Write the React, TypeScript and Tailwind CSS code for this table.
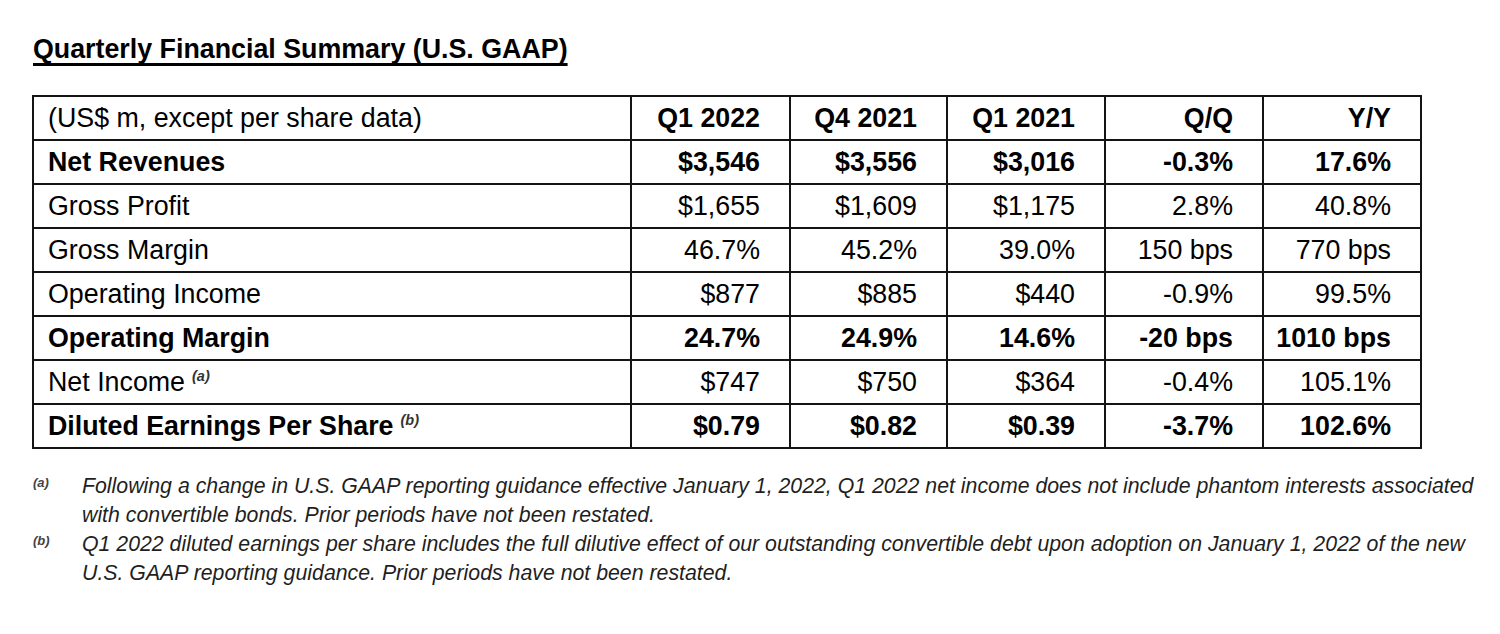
import React from "react";

type Row = {
  label: string;
  note?: string;
  bold?: boolean;
  values: string[];
};

const HEADERS = ["Q1 2022", "Q4 2021", "Q1 2021", "Q/Q", "Y/Y"];

const ROWS: Row[] = [
  { label: "Net Revenues", bold: true, values: ["$3,546", "$3,556", "$3,016", "-0.3%", "17.6%"] },
  { label: "Gross Profit", values: ["$1,655", "$1,609", "$1,175", "2.8%", "40.8%"] },
  { label: "Gross Margin", values: ["46.7%", "45.2%", "39.0%", "150 bps", "770 bps"] },
  { label: "Operating Income", values: ["$877", "$885", "$440", "-0.9%", "99.5%"] },
  { label: "Operating Margin", bold: true, values: ["24.7%", "24.9%", "14.6%", "-20 bps", "1010 bps"] },
  { label: "Net Income", note: "(a)", values: ["$747", "$750", "$364", "-0.4%", "105.1%"] },
  { label: "Diluted Earnings Per Share", note: "(b)", bold: true, values: ["$0.79", "$0.82", "$0.39", "-3.7%", "102.6%"] },
];

const NOTES = [
  {
    mark: "(a)",
    lines: [
      "Following a change in U.S. GAAP reporting guidance effective January 1, 2022, Q1 2022 net income does not include phantom interests associated",
      "with convertible bonds. Prior periods have not been restated.",
    ],
  },
  {
    mark: "(b)",
    lines: [
      "Q1 2022 diluted earnings per share includes the full dilutive effect of our outstanding convertible debt upon adoption on January 1, 2022 of the new",
      "U.S. GAAP reporting guidance. Prior periods have not been restated.",
    ],
  },
];

const cell = "h-[44px] border-2 border-[#141414] p-0 align-middle";

export default function App() {
  return (
    <div
      className="h-[634px] w-[1500px] bg-white pl-[33px] pt-[34px] text-black"
      style={{ fontFamily: '"Liberation Sans", Arial, sans-serif' }}
    >
      <h1 className="text-[26.8px] font-bold leading-[30px] underline decoration-[2.5px] underline-offset-[5px] [text-decoration-skip-ink:none]">
        Quarterly Financial Summary (U.S. GAAP)
      </h1>

      <table className="-ml-px mt-[31px] w-[1388px] table-fixed border-collapse text-[26.8px] leading-[30px]">
        <colgroup>
          <col className="w-[598px]" />
          <col className="w-[159px]" />
          <col className="w-[157px]" />
          <col className="w-[158px]" />
          <col className="w-[158px]" />
          <col className="w-[158px]" />
        </colgroup>
        <thead>
          <tr>
            <th className={`${cell} pl-[14px] text-left font-normal`}>
              (US$ m, except per share data)
            </th>
            {HEADERS.map((h) => (
              <th key={h} className={`${cell} pr-[29px] text-right font-bold`}>
                {h}
              </th>
            ))}
          </tr>
        </thead>
        <tbody>
          {ROWS.map((r) => (
            <tr key={r.label} className={r.bold ? "font-bold" : "font-normal"}>
              <td className={`${cell} pl-[14px] text-left`}>
                {r.label}
                {r.note && (
                  <sup className="ml-[7px] align-[3px] text-[14.5px] font-bold italic text-[#333]">
                    {r.note}
                  </sup>
                )}
              </td>
              {r.values.map((v, i) => (
                <td key={i} className={`${cell} pr-[29px] text-right`}>
                  {v}
                </td>
              ))}
            </tr>
          ))}
        </tbody>
      </table>

      <div className="mt-[23px] flex flex-col text-[21.3px] italic leading-[29px] text-[#1f1f1f]">
        {NOTES.map((n) => (
          <div key={n.mark} className="flex">
            <span className="w-[49px] shrink-0 pt-[1px] text-[13px] font-bold leading-[20px] text-[#444]">
              {n.mark}
            </span>
            <p className="whitespace-nowrap">
              {n.lines[0]}
              <br />
              {n.lines[1]}
            </p>
          </div>
        ))}
      </div>
    </div>
  );
}
